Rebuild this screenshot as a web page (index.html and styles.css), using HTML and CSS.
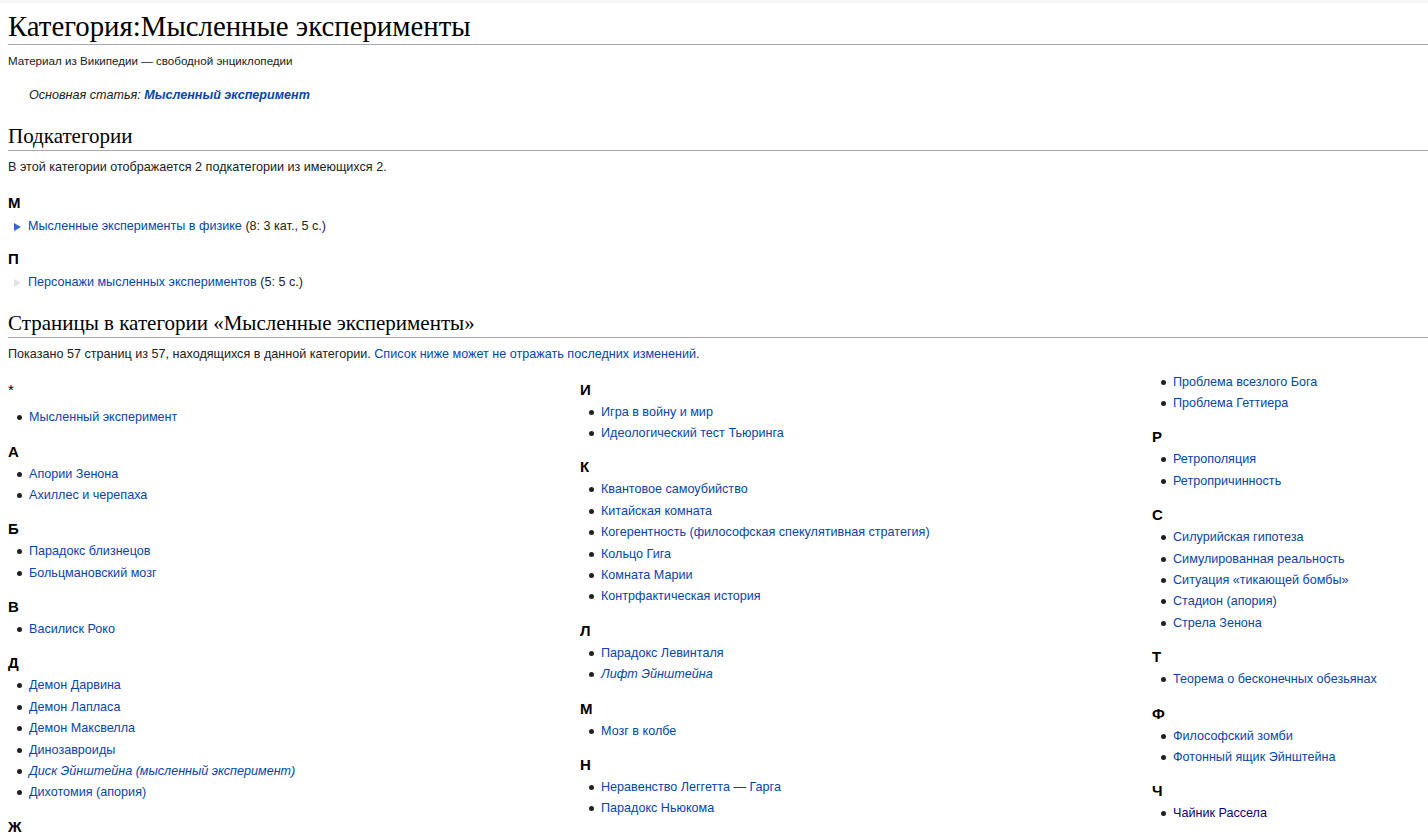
FILE: index.html
```html
<!DOCTYPE html>
<html lang="ru">
<head>
<meta charset="utf-8">
<title>Категория:Мысленные эксперименты</title>
<link rel="stylesheet" href="styles.css">
</head>
<body>
<div class="topband"></div>
<div class="content">
  <h1 class="title">Категория:Мысленные эксперименты</h1>
  <div class="tagline">Материал из Википедии — свободной энциклопедии</div>
  <div class="main-article">Основная статья: <a class="link strong" href="#">Мысленный эксперимент</a></div>

  <h2 class="section section-sub">Подкатегории</h2>
  <p class="note">В этой категории отображается 2 подкатегории из имеющихся 2.</p>
  <div class="subcats">
    <h3 class="letter">М</h3>
    <ul class="tree">
      <li><span class="tri tri-on"></span><a class="link" href="#">Мысленные эксперименты в физике</a> (8: 3 кат., 5 с.)</li>
    </ul>
    <h3 class="letter">П</h3>
    <ul class="tree">
      <li><span class="tri tri-off"></span><a class="link" href="#">Персонажи мысленных экспериментов</a> (5: 5 с.)</li>
    </ul>
  </div>

  <h2 class="section section-pages">Страницы в категории «Мысленные эксперименты»</h2>
  <p class="note note-pages">Показано 57 страниц из 57, находящихся в данной категории. <a class="link" href="#">Список ниже может не отражать последних изменений</a>.</p>

  <div class="columns">
    <div class="col">
      <h3 class="letter star">*</h3>
      <ul class="list"><li><a class="link" href="#">Мысленный эксперимент</a></li></ul>
      <h3 class="letter">А</h3>
      <ul class="list">
        <li><a class="link" href="#">Апории Зенона</a></li>
        <li><a class="link" href="#">Ахиллес и черепаха</a></li>
      </ul>
      <h3 class="letter">Б</h3>
      <ul class="list">
        <li><a class="link" href="#">Парадокс близнецов</a></li>
        <li><a class="link" href="#">Больцмановский мозг</a></li>
      </ul>
      <h3 class="letter">В</h3>
      <ul class="list"><li><a class="link" href="#">Василиск Роко</a></li></ul>
      <h3 class="letter">Д</h3>
      <ul class="list">
        <li><a class="link" href="#">Демон Дарвина</a></li>
        <li><a class="link" href="#">Демон Лапласа</a></li>
        <li><a class="link" href="#">Демон Максвелла</a></li>
        <li><a class="link" href="#">Динозавроиды</a></li>
        <li><a class="link redir" href="#">Диск Эйнштейна (мысленный эксперимент)</a></li>
        <li><a class="link" href="#">Дихотомия (апория)</a></li>
      </ul>
      <h3 class="letter">Ж</h3>
    </div>
    <div class="col">
      <h3 class="letter">И</h3>
      <ul class="list">
        <li><a class="link" href="#">Игра в войну и мир</a></li>
        <li><a class="link" href="#">Идеологический тест Тьюринга</a></li>
      </ul>
      <h3 class="letter">К</h3>
      <ul class="list">
        <li><a class="link" href="#">Квантовое самоубийство</a></li>
        <li><a class="link" href="#">Китайская комната</a></li>
        <li><a class="link" href="#">Когерентность (философская спекулятивная стратегия)</a></li>
        <li><a class="link" href="#">Кольцо Гига</a></li>
        <li><a class="link" href="#">Комната Марии</a></li>
        <li><a class="link" href="#">Контрфактическая история</a></li>
      </ul>
      <h3 class="letter">Л</h3>
      <ul class="list">
        <li><a class="link" href="#">Парадокс Левинталя</a></li>
        <li><a class="link redir" href="#">Лифт Эйнштейна</a></li>
      </ul>
      <h3 class="letter">М</h3>
      <ul class="list"><li><a class="link" href="#">Мозг в колбе</a></li></ul>
      <h3 class="letter">Н</h3>
      <ul class="list">
        <li><a class="link" href="#">Неравенство Леггетта — Гарга</a></li>
        <li><a class="link" href="#">Парадокс Ньюкома</a></li>
      </ul>
      <h3 class="letter">П</h3>
    </div>
    <div class="col">
      <ul class="list">
        <li><a class="link" href="#">Проблема всезлого Бога</a></li>
        <li><a class="link" href="#">Проблема Геттиера</a></li>
      </ul>
      <h3 class="letter">Р</h3>
      <ul class="list">
        <li><a class="link" href="#">Ретрополяция</a></li>
        <li><a class="link" href="#">Ретропричинность</a></li>
      </ul>
      <h3 class="letter">С</h3>
      <ul class="list">
        <li><a class="link" href="#">Силурийская гипотеза</a></li>
        <li><a class="link" href="#">Симулированная реальность</a></li>
        <li><a class="link" href="#">Ситуация «тикающей бомбы»</a></li>
        <li><a class="link" href="#">Стадион (апория)</a></li>
        <li><a class="link" href="#">Стрела Зенона</a></li>
      </ul>
      <h3 class="letter">Т</h3>
      <ul class="list"><li><a class="link" href="#">Теорема о бесконечных обезьянах</a></li></ul>
      <h3 class="letter">Ф</h3>
      <ul class="list">
        <li><a class="link" href="#">Философский зомби</a></li>
        <li><a class="link" href="#">Фотонный ящик Эйнштейна</a></li>
      </ul>
      <h3 class="letter">Ч</h3>
      <ul class="list"><li><a class="link visited" href="#">Чайник Рассела</a></li></ul>
    </div>
  </div>
</div>
</body>
</html>
```

FILE: styles.css
```css
html, body {
  margin: 0;
  padding: 0;
  background: #ffffff;
}

body {
  font-family: "Liberation Sans", Arial, sans-serif;
  font-size: 12.6px;
  color: #202122;
  overflow: hidden;
}

.topband {
  height: 3px;
  background: #f6f6f6;
}

.content {
  padding-left: 8px;
}

.link {
  color: #0645ad;
  text-decoration: none;
}

.link.strong {
  font-weight: bold;
}

.link.redir {
  font-style: italic;
}

.link.visited {
  color: #0b0080;
}

.title {
  font-family: "Liberation Serif", "Times New Roman", serif;
  font-weight: normal;
  font-size: 28.8px;
  line-height: 1.2;
  margin: 6px 0 0;
  padding: 0;
  border-bottom: 1px solid #a2a9b1;
  color: #000;
}

.tagline {
  font-size: 11.6px;
  line-height: 18px;
  margin-top: 7px;
}

.main-article {
  font-style: italic;
  padding-left: 21px;
  margin-top: 15px;
  line-height: 20px;
}

.section {
  font-family: "Liberation Serif", "Times New Roman", serif;
  font-weight: normal;
  font-size: 21px;
  line-height: 1.3;
  margin: 0;
  padding: 0;
  border-bottom: 1px solid #a2a9b1;
  color: #000;
}

.section-sub {
  margin-top: 18px;
}

.section-pages {
  margin-top: 12px;
}

.note {
  margin: 6px 0 0;
  line-height: 20px;
}

.note-pages {
  margin-top: 6px;
}

.letter {
  font-size: 15px;
  font-weight: bold;
  line-height: 23px;
  margin: 6px 0 0;
  padding-bottom: 1px;
  color: #000;
}

.letter.star {
  font-weight: normal;
  padding-bottom: 6.5px;
}

.subcats {
  padding-top: 8px;
}

.subcats .letter {
  padding-bottom: 2px;
}

.tree {
  list-style: none;
  margin: 0;
  padding: 0 0 5.5px;
}

.tree li {
  line-height: 20px;
}

.tri {
  display: inline-block;
  vertical-align: -1px;
  width: 0;
  height: 0;
  border-top: 4.5px solid transparent;
  border-bottom: 4.5px solid transparent;
  border-left: 7px solid #3366cc;
  margin: 0 7px 0 6px;
}

.tri-off {
  border-left-color: #e2e4e7;
}

.columns {
  display: grid;
  grid-template-columns: 572px 572px 1fr;
  align-items: start;
  margin-top: 7.5px;
}

.list {
  margin: 0;
  padding: 0 0 5px 21px;
  list-style: none;
}

.list li {
  position: relative;
  line-height: 20px;
  margin-bottom: 1.4px;
}

.list li::before {
  content: "";
  position: absolute;
  left: -12px;
  top: 8px;
  width: 5px;
  height: 5px;
  border-radius: 50%;
  background: #202122;
}
```
